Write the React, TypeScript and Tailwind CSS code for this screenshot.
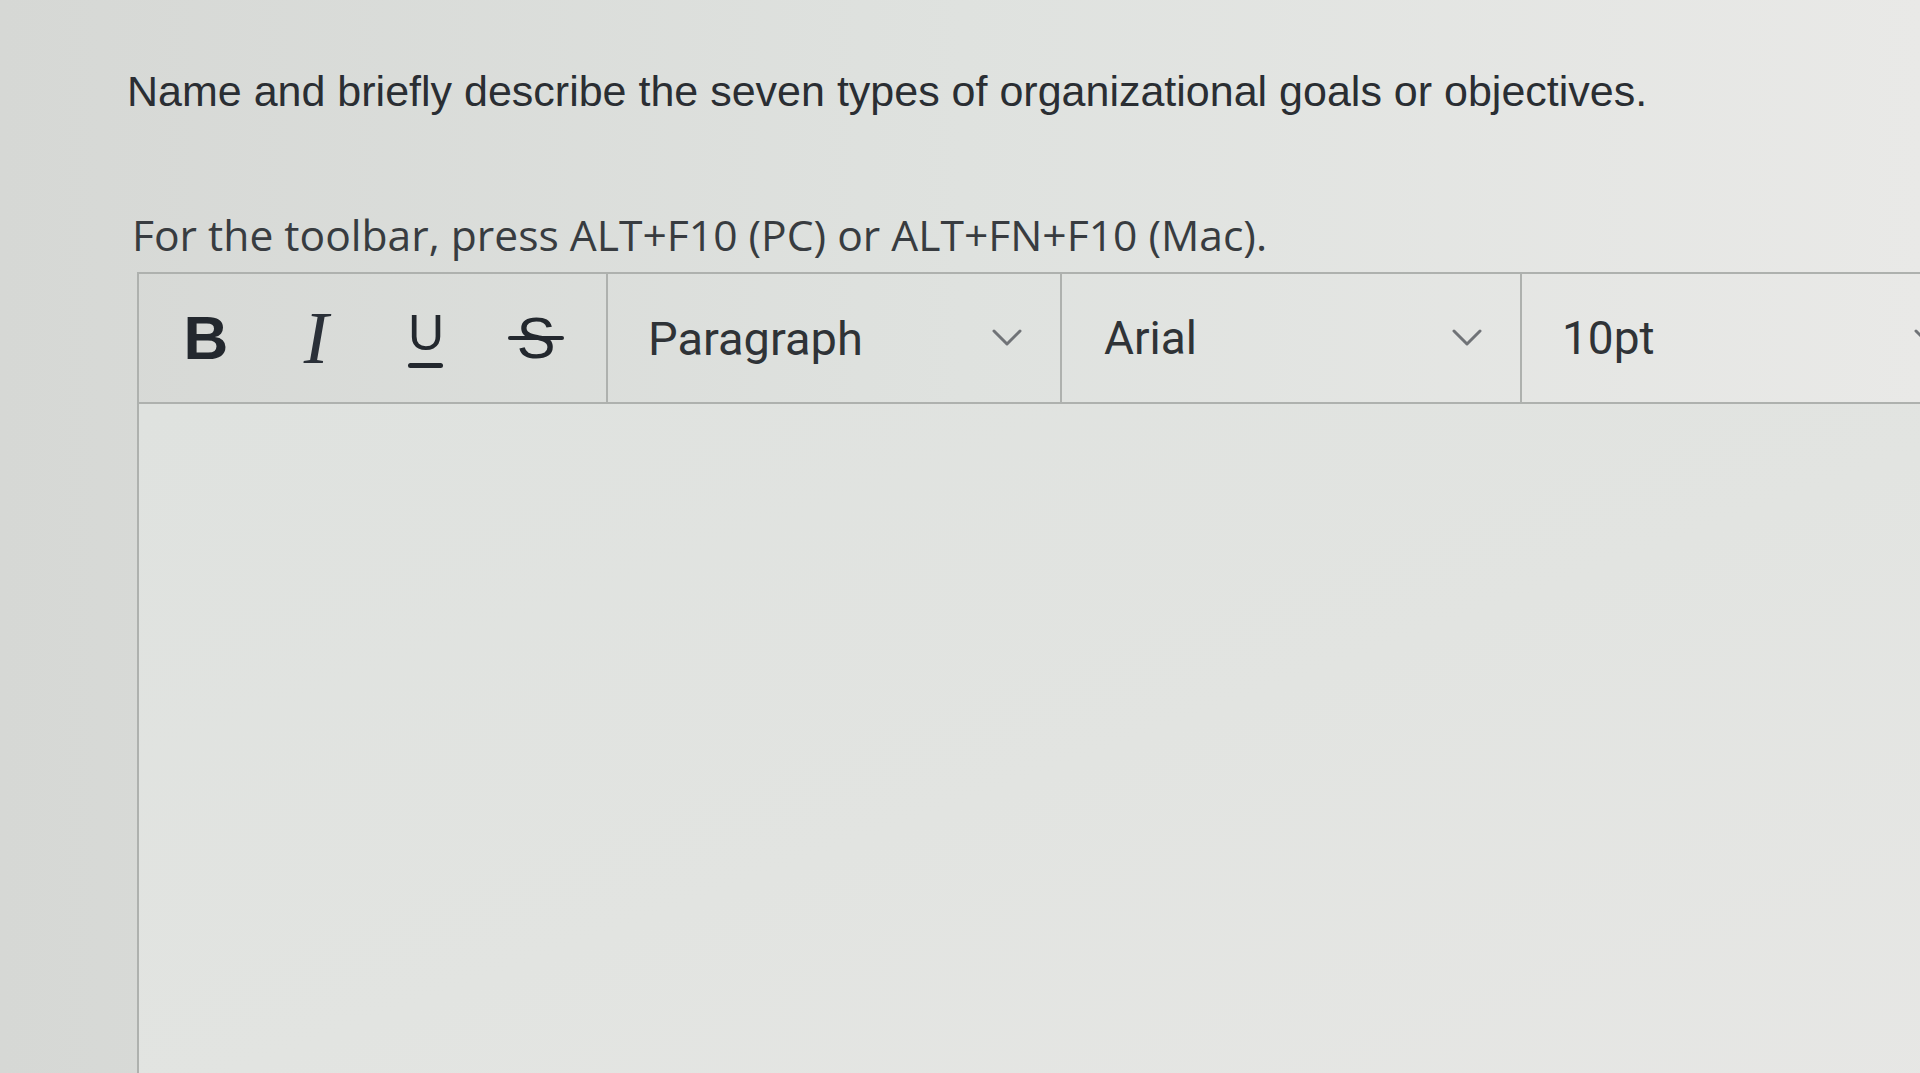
import React from "react";

function Chevron() {
  return (
    <svg width="30" height="18" viewBox="0 0 30 18" className="shrink-0">
      <polyline points="2,2 15,15 28,2" fill="none" stroke="#707377" strokeWidth="3" strokeLinecap="round" strokeLinejoin="round" />
    </svg>
  );
}

export default function App() {
  return (
    <div className="relative h-[1073px] w-[1920px] overflow-hidden bg-gradient-to-r from-[#d6d8d5] via-[#dfe2df] to-[#e9e9e7]">
      <div className="flex flex-col pl-[127px] pt-[66px]">
        <h1
          className="text-[43px] leading-[50px] font-normal text-[#2a2e33] whitespace-nowrap"
          style={{ fontFamily: '"Liberation Sans", Arial, sans-serif' }}
        >
          Name and briefly describe the seven types of organizational goals or objectives.
        </h1>
        <p
          className="mt-[90px] pl-[5px] text-[42.6px] leading-[57px] text-[#383c40] whitespace-nowrap"
          style={{ fontFamily: '"Open Sans", sans-serif' }}
        >
          For the toolbar, press ALT+F10 (PC) or ALT+FN+F10 (Mac).
        </p>
        <div className="mt-[9px] ml-[10px] flex h-[830px] w-[1900px] flex-col border-l-2 border-t-2 border-[#aeb1ae]">
          <div
            className="flex h-[130px] shrink-0 border-b-2 border-[#aeb1ae] text-[#2f3337]"
            style={{ fontFamily: 'Roboto, sans-serif' }}
          >
            <div className="flex w-[469px] shrink-0 items-center border-r-2 border-[#aeb1ae] pl-[12px]">
              <div className="flex h-full w-[110px] items-center justify-center">
                <span className="text-[62px] font-bold leading-none text-[#23282e]" style={{ fontFamily: '"Liberation Sans", Arial, sans-serif' }}>B</span>
              </div>
              <div className="flex h-full w-[110px] items-center justify-center">
                <span className="text-[74px] italic leading-none text-[#2a3038]" style={{ fontFamily: '"Liberation Serif", serif' }}>I</span>
              </div>
              <div className="flex h-full w-[110px] items-center justify-center">
                <div className="flex flex-col items-center">
                  <span className="text-[50px] leading-none text-[#23282e]" style={{ fontFamily: '"Liberation Sans", Arial, sans-serif' }}>U</span>
                  <div className="mt-[5px] h-[5px] w-[35px] rounded-sm bg-[#23282e]" />
                </div>
              </div>
              <div className="flex h-full w-[110px] items-center justify-center">
                <div className="relative flex items-center justify-center">
                  <span className="text-[58px] leading-none text-[#23282e]" style={{ fontFamily: '"Liberation Sans", Arial, sans-serif' }}>S</span>
                  <div className="absolute left-[-9px] right-[-9px] top-1/2 h-[4px] -translate-y-1/2 rounded-sm bg-[#23282e]" />
                </div>
              </div>
            </div>
            <div className="flex w-[454px] shrink-0 items-center justify-between border-r-2 border-[#aeb1ae] pl-[40px] pr-[38px]">
              <span className="text-[47px] leading-none">Paragraph</span>
              <Chevron />
            </div>
            <div className="flex w-[460px] shrink-0 items-center justify-between border-r-2 border-[#aeb1ae] pl-[42px] pr-[38px]">
              <span className="text-[46px] leading-none">Arial</span>
              <Chevron />
            </div>
            <div className="flex w-[460px] shrink-0 items-center justify-between pl-[40px] pr-[38px]">
              <span className="text-[46px] leading-none">10pt</span>
              <Chevron />
            </div>
          </div>
          <div className="flex-1 bg-gradient-to-br from-[#dfe2df] via-[#e2e4e1] to-[#e7e7e5]" />
        </div>
      </div>
    </div>
  );
}
